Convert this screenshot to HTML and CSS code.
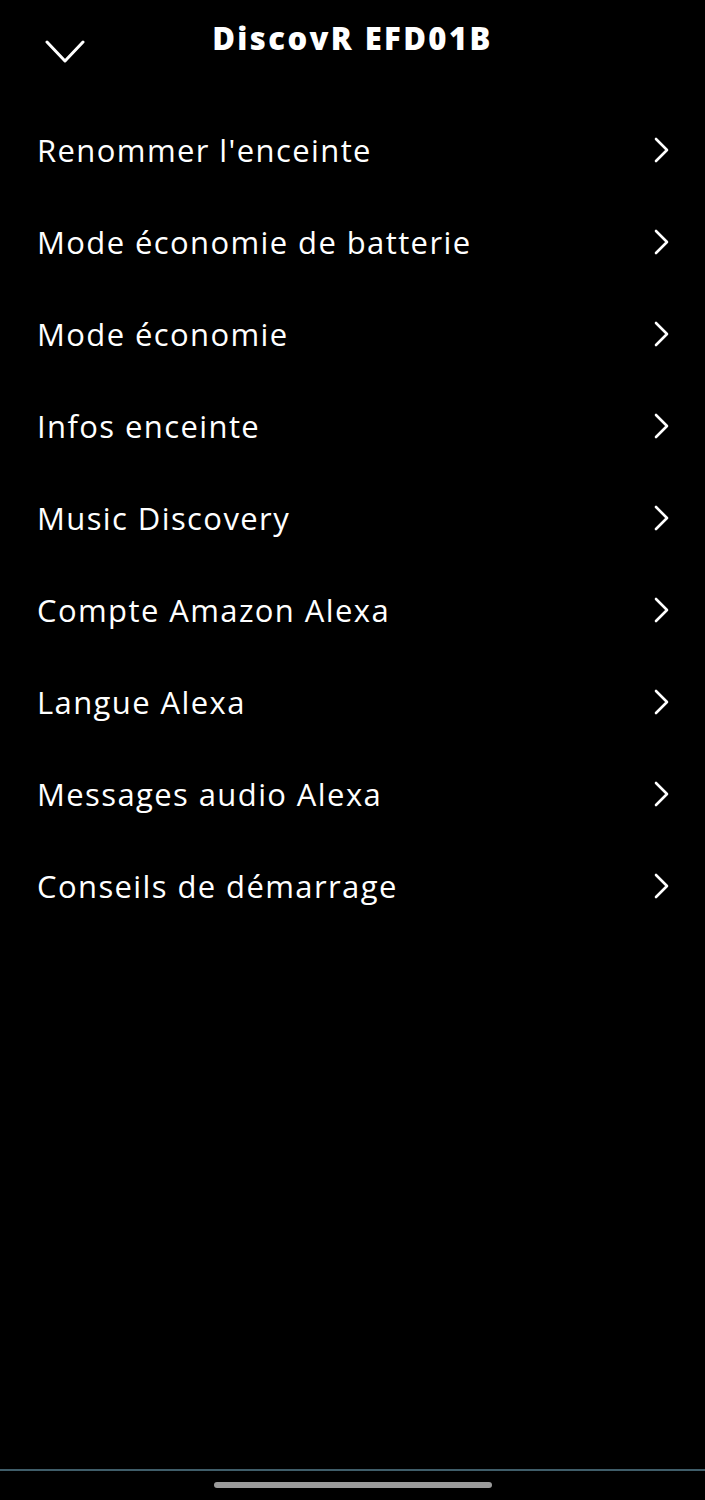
FILE: index.html
```html
<!DOCTYPE html>
<html lang="fr">
<head>
  <title>DiscovR EFD01B</title>
  <meta charset="UTF-8">
  <meta name="viewport" content="width=device-width, initial-scale=1">
  <link rel="stylesheet" href="styles.css">
</head>
<body>

  <header class="topbar">
    <button class="back">
      <svg width="40" height="24" viewBox="0 0 40 24">
        <path d="M2 2 L20 21 L38 2" fill="none" stroke="#fff" stroke-width="3" stroke-linecap="round" stroke-linejoin="round"/>
      </svg>
    </button>
    <h1 class="title">DiscovR EFD01B</h1>
    <div></div>
  </header>

  <main class="menu">
    <a class="item" href="#"><span>Renommer l'enceinte</span><svg class="arrow" width="16" height="26" viewBox="0 0 16 26"><path d="M2 2 L13 13 L2 24"/></svg></a>
    <a class="item" href="#"><span>Mode économie de batterie</span><svg class="arrow" width="16" height="26" viewBox="0 0 16 26"><path d="M2 2 L13 13 L2 24"/></svg></a>
    <a class="item" href="#"><span>Mode économie</span><svg class="arrow" width="16" height="26" viewBox="0 0 16 26"><path d="M2 2 L13 13 L2 24"/></svg></a>
    <a class="item" href="#"><span>Infos enceinte</span><svg class="arrow" width="16" height="26" viewBox="0 0 16 26"><path d="M2 2 L13 13 L2 24"/></svg></a>
    <a class="item" href="#"><span>Music Discovery</span><svg class="arrow" width="16" height="26" viewBox="0 0 16 26"><path d="M2 2 L13 13 L2 24"/></svg></a>
    <a class="item" href="#"><span>Compte Amazon Alexa</span><svg class="arrow" width="16" height="26" viewBox="0 0 16 26"><path d="M2 2 L13 13 L2 24"/></svg></a>
    <a class="item" href="#"><span>Langue Alexa</span><svg class="arrow" width="16" height="26" viewBox="0 0 16 26"><path d="M2 2 L13 13 L2 24"/></svg></a>
    <a class="item" href="#"><span>Messages audio Alexa</span><svg class="arrow" width="16" height="26" viewBox="0 0 16 26"><path d="M2 2 L13 13 L2 24"/></svg></a>
    <a class="item" href="#"><span>Conseils de démarrage</span><svg class="arrow" width="16" height="26" viewBox="0 0 16 26"><path d="M2 2 L13 13 L2 24"/></svg></a>
  </main>

  <footer class="navbar">
    <div class="handle"></div>
  </footer>

</body>
</html>
```

FILE: styles.css
```css
* {
  margin: 0;
  box-sizing: border-box;
}

body {
  font-family: 'Open Sans', 'Noto Sans', sans-serif;
  background-color: #000;
  color: #fff;
  height: 1500px;
  display: flex;
  flex-direction: column;
}

.topbar {
  height: 104px;
  display: grid;
  grid-template-columns: 1fr auto 1fr;
  align-items: start;
}

.back {
  background: none;
  border: none;
  padding: 0;
  margin: 40px 0 0 45px;
  justify-self: start;
  display: flex;
}

.title {
  font-size: 31px;
  font-weight: 800;
  letter-spacing: 2.4px;
  line-height: 40px;
  margin-top: 18px;
}

.menu {
  flex: 1;
  display: flex;
  flex-direction: column;
}

.item {
  height: 92px;
  display: flex;
  align-items: center;
  justify-content: space-between;
  padding: 0 35px 0 37px;
  color: #fff;
  text-decoration: none;
  font-size: 31px;
  letter-spacing: 1.4px;
}

.arrow path {
  fill: none;
  stroke: #fff;
  stroke-width: 2.6;
  stroke-linecap: round;
  stroke-linejoin: round;
}

.navbar {
  height: 31px;
  border-top: 2px solid #3f5d69;
  padding-top: 11px;
  display: flex;
  justify-content: center;
}

.handle {
  width: 278px;
  height: 6px;
  border-radius: 3px;
  background-color: #9b9b9b;
}
```
